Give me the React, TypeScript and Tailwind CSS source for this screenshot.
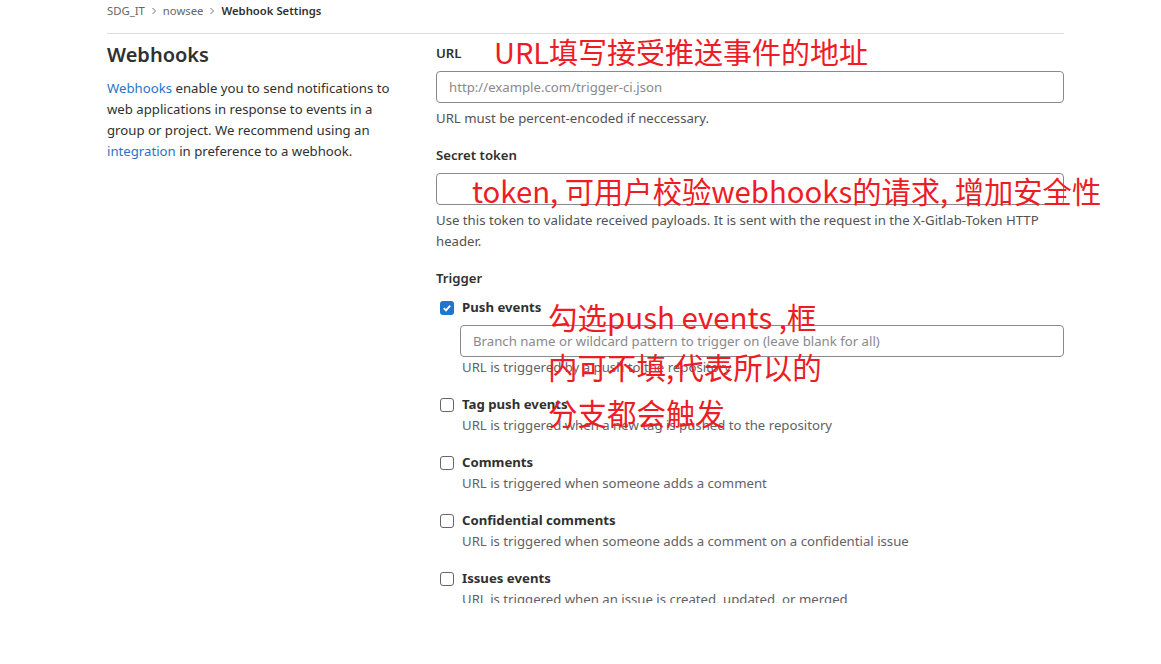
import React from 'react';

const font = { fontFamily: '"Noto Sans", "Noto Sans CJK SC", sans-serif' };

const triggers = [
  { title: 'Push events', help: 'URL is triggered by a push to the repository', checked: true, branch: true },
  { title: 'Tag push events', help: 'URL is triggered when a new tag is pushed to the repository' },
  { title: 'Comments', help: 'URL is triggered when someone adds a comment' },
  { title: 'Confidential comments', help: 'URL is triggered when someone adds a comment on a confidential issue' },
  { title: 'Issues events', help: 'URL is triggered when an issue is created, updated, or merged' },
];

const Chevron = () => (
  <svg width="6" height="8" viewBox="0 0 6 8" className="mx-[6px] text-[#737278]">
    <path d="M1.5 1l3 3-3 3" fill="none" stroke="currentColor" strokeWidth="1" />
  </svg>
);

const Checkbox = ({ checked }: { checked?: boolean }) =>
  checked ? (
    <div className="w-[14px] h-[14px] rounded-[3px] bg-[#1f75cb] flex items-center justify-center">
      <svg width="10" height="10" viewBox="0 0 10 10">
        <path d="M1.8 5.2l2.2 2.2 4.2-4.8" fill="none" stroke="white" strokeWidth="1.8" />
      </svg>
    </div>
  ) : (
    <div className="w-[14px] h-[14px] rounded-[3px] border border-[#666] bg-white" />
  );

const Note = ({ className, children }: { className: string; children: React.ReactNode }) => (
  <div
    className={`absolute leading-[36px] text-[#ee1c25] whitespace-nowrap ${className}`}
    style={{ fontFamily: '"Noto Sans CJK SC", "Noto Sans", sans-serif' }}
  >
    {children}
  </div>
);

export default function App() {
  return (
    <div className="relative w-[1161px] h-[664px] bg-white overflow-hidden" style={font}>
      <div className="h-[603px] overflow-hidden">
        <div className="ml-[107px] w-[957px]">
          <div className="h-[34px] border-b border-[#dcdcde] flex items-start">
            <div className="h-[22px] flex items-center text-[11.3px] text-[#666]">
              <span>SDG_IT</span>
              <Chevron />
              <span>nowsee</span>
              <Chevron />
              <span className="font-semibold text-[#303030]">Webhook Settings</span>
            </div>
          </div>

          <div className="grid grid-cols-[329px_628px]">
            <div className="pt-[7px] pr-6">
              <h2 className="text-[20px] leading-[28px] font-semibold text-[#303030]">Webhooks</h2>
              <p className="mt-[9px] text-[13.2px] leading-[21px] text-[#303030]">
                <span className="text-[#1f75cb]">Webhooks</span> enable you to send notifications to web
                applications in response to events in a group or project. We recommend using an{' '}
                <span className="text-[#1f75cb]">integration</span> in preference to a webhook.
              </p>
            </div>

            <div className="pt-[9px] text-[13.2px] leading-[21px] text-[#303030]">
              <div className="font-semibold">URL</div>
              <div className="mt-[7px] h-[32px] rounded-[4px] border border-[#89888d] px-3 flex items-center text-[#89888d]">
                http://example.com/trigger-ci.json
              </div>
              <div className="mt-[5px] text-[#525252]">URL must be percent-encoded if neccessary.</div>

              <div className="mt-4 font-semibold">Secret token</div>
              <div className="mt-[7px] h-[32px] rounded-[4px] border border-[#89888d]" />
              <div className="mt-[5px] text-[#525252]">
                Use this token to validate received payloads. It is sent with the request in the X-Gitlab-Token HTTP
                header.
              </div>

              <div className="mt-4 font-semibold">Trigger</div>
              <div className="mt-2 flex flex-col gap-4">
                {triggers.map((t) => (
                  <div key={t.title} className="flex">
                    <div className="w-[26px] pl-1 pt-[4px]">
                      <Checkbox checked={t.checked} />
                    </div>
                    <div className="flex-1 min-w-0">
                      <div className="font-bold text-[#303030]">{t.title}</div>
                      {t.branch && (
                        <div className="mt-[7px] ml-[-2px] h-[32px] rounded-[4px] border border-[#89888d] px-3 flex items-center text-[#89888d]">
                          Branch name or wildcard pattern to trigger on (leave blank for all)
                        </div>
                      )}
                      <div className="text-[#626168]">{t.help}</div>
                    </div>
                  </div>
                ))}
              </div>
            </div>
          </div>
        </div>
      </div>

      <Note className="left-[494px] top-[33px] text-[29px]">URL填写接受推送事件的地址</Note>
      <Note className="left-[472px] top-[172px] text-[29.3px]">token, 可用户校验webhooks的请求, 增加安全性</Note>
      <Note className="left-[548px] top-[298px] text-[29.5px]">勾选push events ,框</Note>
      <Note className="left-[548px] top-[348px] text-[29.5px]">内可不填,代表所以的</Note>
      <Note className="left-[548px] top-[394px] text-[29.5px]">分支都会触发</Note>
    </div>
  );
}
